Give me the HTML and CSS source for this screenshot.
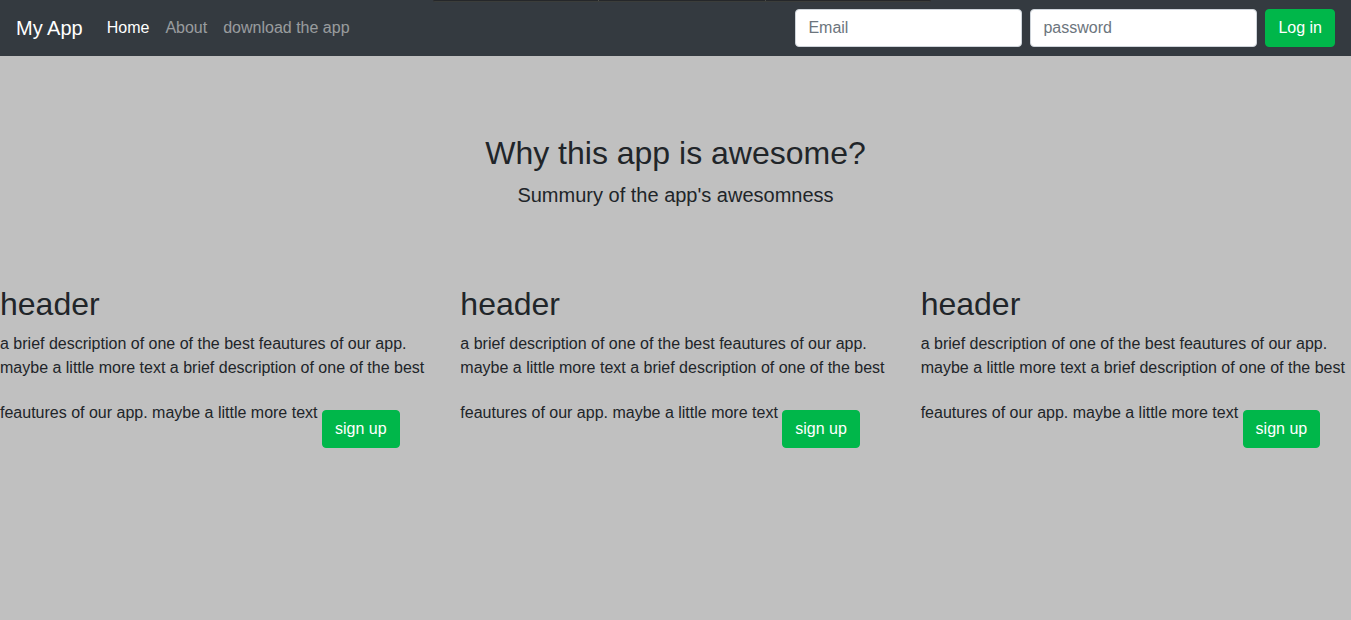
FILE: index.html
```html
<!DOCTYPE html>
<html lang="en">
<head>
<meta charset="utf-8">
<title>My App</title>
<link rel="stylesheet" href="styles.css">
</head>
<body>
<div class="topbar-overlay"><span></span><span></span><span></span></div>
<nav class="navbar">
  <a class="brand" href="#">My App</a>
  <ul class="nav-links">
    <li><a class="nav-link active" href="#">Home</a></li>
    <li><a class="nav-link" href="#">About</a></li>
    <li><a class="nav-link" href="#">download the app</a></li>
  </ul>
  <form class="login-form">
    <input class="form-control" type="email" placeholder="Email">
    <input class="form-control" type="password" placeholder="password">
    <button class="btn btn-green" type="button">Log in</button>
  </form>
</nav>
<main>
  <section class="hero">
    <h2 class="hero-title">Why this app is awesome?</h2>
    <p class="lead">Summury of the app's awesomness</p>
  </section>
  <section class="features">
    <div class="col">
      <h2 class="col-title">header</h2>
      <p class="col-text">a brief description of one of the best feautures of our app. maybe a little more text a brief description of one of the best</p>
      <p class="col-text">feautures of our app. maybe a little more text <button class="btn btn-green signup" type="button">sign up</button></p>
    </div>
    <div class="col">
      <h2 class="col-title">header</h2>
      <p class="col-text">a brief description of one of the best feautures of our app. maybe a little more text a brief description of one of the best</p>
      <p class="col-text">feautures of our app. maybe a little more text <button class="btn btn-green signup" type="button">sign up</button></p>
    </div>
    <div class="col">
      <h2 class="col-title">header</h2>
      <p class="col-text">a brief description of one of the best feautures of our app. maybe a little more text a brief description of one of the best</p>
      <p class="col-text">feautures of our app. maybe a little more text <button class="btn btn-green signup" type="button">sign up</button></p>
    </div>
  </section>
</main>
</body>
</html>
```

FILE: styles.css
```css
* { box-sizing: border-box; }

html, body {
  margin: 0;
  padding: 0;
}

body {
  font-family: "Liberation Sans", Arial, sans-serif;
  font-size: 16px;
  line-height: 1.5;
  color: #212529;
  background: #c0c0c0;
  overflow-x: hidden;
}

.topbar-overlay {
  position: absolute;
  top: 0;
  left: 433px;
  width: 498px;
  height: 2px;
  display: flex;
  background: #25272a;
  border-bottom: 1px solid #3b3d3a;
  border-radius: 0 0 2px 2px;
  z-index: 5;
}

.topbar-overlay span {
  flex: 1;
  border-right: 1px solid #4a4c48;
}

.topbar-overlay span:last-child { border-right: none; }

.navbar {
  height: 56px;
  background: #343a40;
  display: flex;
  align-items: center;
  padding: 8px 16px;
}

.brand {
  font-size: 20px;
  line-height: 30px;
  padding: 5px 0;
  margin-right: 16px;
  color: #fff;
  text-decoration: none;
}

.nav-links {
  display: flex;
  list-style: none;
  margin: 0;
  padding: 0;
  flex: 1;
}

.nav-link {
  display: block;
  padding: 8px;
  color: rgba(255, 255, 255, 0.5);
  text-decoration: none;
  line-height: 24px;
}

.nav-link.active { color: #fff; }

.login-form {
  display: flex;
  align-items: center;
  gap: 8px;
}

.form-control {
  width: 227px;
  height: 38px;
  padding: 6px 12px;
  font-family: inherit;
  font-size: 16px;
  line-height: 24px;
  color: #495057;
  background: #fff;
  border: 1px solid #ced4da;
  border-radius: 4px;
}

.form-control::placeholder { color: #6c757d; }

.btn {
  display: inline-block;
  height: 38px;
  padding: 6px 12px;
  font-family: inherit;
  font-size: 16px;
  line-height: 24px;
  border: 1px solid transparent;
  border-radius: 4px;
  cursor: pointer;
}

.btn-green {
  background: #00b74a;
  border-color: #00b74a;
  color: #fff;
}

.hero {
  text-align: center;
  padding-top: 78px;
}

.hero-title,
.col-title {
  font-size: 32px;
  font-weight: 500;
  line-height: 1.2;
  margin: 0 0 8px;
}

.lead {
  font-size: 20px;
  line-height: 1.5;
  margin: 0;
}

.features {
  display: flex;
  margin: 75px -15px 0;
}

.col {
  flex: 0 0 33.3333%;
  padding: 0 15px;
}

.col-text {
  margin: 0 0 21px;
}

.col-text:last-child {
  margin-bottom: 16px;
}

.signup {
  vertical-align: top;
  margin-top: 9px;
}
```
